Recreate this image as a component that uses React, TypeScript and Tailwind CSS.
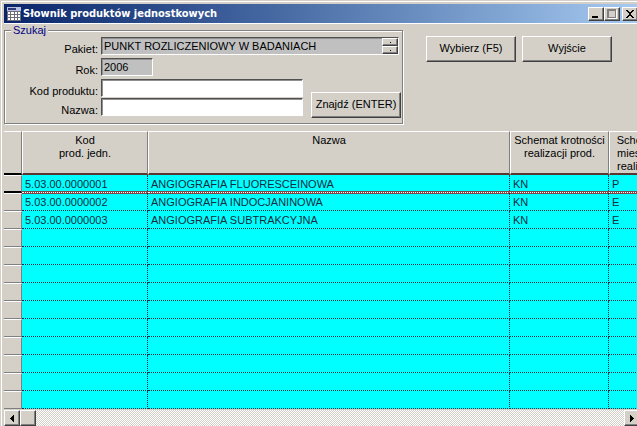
import type { InputHTMLAttributes, ReactNode } from 'react'

interface Product {
  code: string
  name: string
  scheme: string
  monthly: string
}

const products: Product[] = [
  { code: '5.03.00.0000001', name: 'ANGIOGRAFIA FLUORESCEINOWA', scheme: 'KN', monthly: 'P' },
  { code: '5.03.00.0000002', name: 'ANGIOGRAFIA INDOCJANINOWA', scheme: 'KN', monthly: 'E' },
  { code: '5.03.00.0000003', name: 'ANGIOGRAFIA SUBTRAKCYJNA', scheme: 'KN', monthly: 'E' },
]

const VISIBLE_ROWS = 13

const rows = Array.from({ length: VISIBLE_ROWS }, (_, i) => products[i] ?? null)

const raised =
  'bg-[#d4d0c8] border border-t-white border-l-white border-r-[#404040] border-b-[#404040] shadow-[inset_-1px_-1px_0_#808080]'

const sunken =
  'h-[18px] min-w-0 border border-t-[#505050] border-l-[#505050] border-r-white border-b-white shadow-[inset_1px_1px_0_#909090]'

function CaptionButton({ label, className = '', children }: { label: string; className?: string; children: ReactNode }) {
  return (
    <button type="button" aria-label={label} className={`${raised} flex h-[14px] w-4 shrink-0 items-center justify-center ${className}`}>
      {children}
    </button>
  )
}

function PushButton({ children }: { children: ReactNode }) {
  return (
    <button type="button" className={`${raised} h-[26px] w-[90px] shrink-0 whitespace-nowrap pb-px text-center`}>
      {children}
    </button>
  )
}

function Field({ id, label, className = '', children, ...rest }: { label: string; children?: ReactNode } & InputHTMLAttributes<HTMLInputElement>) {
  return (
    <div className="flex items-end">
      <label htmlFor={id} className="w-24 shrink-0 pr-[3px] text-right leading-3">
        {label}
      </label>
      <div className={`${sunken} flex items-center ${className}`}>
        <input id={id} type="text" className="h-4 w-full min-w-0 bg-transparent pl-[2px] outline-none" {...rest} />
        {children}
      </div>
    </div>
  )
}

function TableIcon() {
  return (
    <svg width="14" height="14" viewBox="0 0 14 14" shapeRendering="crispEdges" className="shrink-0" aria-hidden="true">
      <path fill="#6c6c78" d="M0 0h14v14H0z" />
      <path fill="#b8c0e0" d="M0 0h14v4H0z" />
      <path fill="#303878" d="M1 1h8v2H1z" />
      <path fill="#fff" d="M1 5h2v2H1zM4 5h3v2H4zM8 5h2v2H8zM11 5h2v2h-2zM1 8h2v2H1zM4 8h3v2H4zM8 8h2v2H8zM11 8h2v2h-2zM1 11h2v2H1zM4 11h3v2H4zM8 11h2v2H8zM11 11h2v2h-2z" />
    </svg>
  )
}

function TitleBar() {
  return (
    <header className="flex h-[19px] items-center bg-linear-to-r from-[#0a246a] to-[#a6caf0] pl-[3px]">
      <TableIcon />
      <h1 className="ml-[2px] flex-1 truncate font-['DejaVu_Sans_Condensed','DejaVu_Sans',sans-serif] text-[11px] leading-4 font-bold text-white">
        Słownik produktów jednostkowych
      </h1>
      <CaptionButton label="Minimalizuj">
        <svg width="12" height="10" shapeRendering="crispEdges"><path d="M2 7h6v2H2z" /></svg>
      </CaptionButton>
      <CaptionButton label="Maksymalizuj">
        <svg width="12" height="10" shapeRendering="crispEdges">
          <path d="M2 1h9v9H2z" fill="#fff" />
          <path d="M1 0h9v9H1z" fill="#808080" />
          <path d="M3 2h6v6H3z" fill="#d4d0c8" />
        </svg>
      </CaptionButton>
      <CaptionButton label="Zamknij" className="ml-[2px] -mr-px">
        <svg width="12" height="10" shapeRendering="crispEdges">
          <path d="M2 1h2v1h1v1h2V2h1V1h2v1H9v1H8v1H7v2h1v1h1v1h1v1H8V8H7V7H5v1H4v1H2V8h1V7h1V6h1V4H4V3H3V2H2z" />
        </svg>
      </CaptionButton>
    </header>
  )
}

function SearchBox() {
  return (
    <fieldset className="w-[399px] shrink-0 border border-[#808080] pt-px pb-[5px] shadow-[1px_1px_0_#fff,inset_1px_1px_0_#fff]">
      <legend className="ml-[6px] bg-[#d4d0c8] px-[2px] leading-3 text-[#000080]">Szukaj</legend>
      <div className="flex flex-col gap-[3px]">
        <Field id="pakiet" label="Pakiet:" readOnly defaultValue="PUNKT ROZLICZENIOWY W BADANIACH" className="w-[298px] bg-[#c0c0c0]">
          <div className="flex h-4 w-4 shrink-0 flex-col">
            <button type="button" aria-label="Poprzedni pakiet" className={`${raised} flex h-2 items-center justify-center`}>
              <span className="size-px bg-black" />
            </button>
            <button type="button" aria-label="Następny pakiet" className={`${raised} flex h-2 items-center justify-center`}>
              <span className="size-px bg-black" />
            </button>
          </div>
        </Field>
        <Field id="rok" label="Rok:" readOnly defaultValue="2006" className="w-[52px] bg-[#c0c0c0]" />
        <div className="flex items-end gap-2">
          <div className="flex flex-col gap-px pb-[2px]">
            <Field id="kod" label="Kod produktu:" className="w-[202px] bg-white" />
            <Field id="nazwa" label="Nazwa:" className="w-[202px] bg-white" />
          </div>
          <PushButton>Znajdź (ENTER)</PushButton>
        </div>
      </div>
    </fieldset>
  )
}

const th = 'border-t border-r border-l border-t-white border-l-white border-r-[#808080] border-b-2 border-b-[#5c3430] px-0 pt-[2px] align-top font-normal leading-[13px]'

const selectedCell =
  'border-b-white bg-[linear-gradient(#00ffff_16px,#7c4848_16px)] bg-origin-border'

function ProductTable() {
  return (
    <div className="overflow-hidden">
      <table className="w-[calc(100%+31px)] table-fixed border-separate border-spacing-0">
        <colgroup>
          <col className="w-[18px]" />
          <col className="w-[126px]" />
          <col />
          <col className="w-[99px]" />
          <col className="w-[59px]" />
        </colgroup>
        <thead>
          <tr className="h-11">
            <td className="border-t border-r border-b-2 border-t-white border-r-[#808080] border-b-black" />
            <th scope="col" className={th}>Kod<br />prod. jedn.</th>
            <th scope="col" className={th}>Nazwa</th>
            <th scope="col" className={th}>Schemat krotności<br />realizacji prod.</th>
            <th scope="col" className={th}>Schemat<br />miesięcy<br />realizacji</th>
          </tr>
        </thead>
        <tbody>
          {rows.map((row, i) => {
            const selected = i === 0
            const cell = `h-[18px] overflow-hidden whitespace-nowrap border-r border-b border-dotted border-r-[#103040] p-0 pl-[3px] leading-4 text-[#102c40] ${
              selected ? selectedCell : 'border-b-[#103040] bg-[#00ffff]'
            } ${i === 1 ? 'shadow-[inset_0_1px_0_#7c4848]' : ''}`
            return (
              <tr key={i} aria-selected={selected}>
                <td className={`h-[18px] border-t border-r border-t-white border-r-[#808080] p-0 ${selected ? 'border-b-2 border-b-black' : 'border-b border-b-[#808080]'}`} />
                <td className={cell}>{row?.code}</td>
                <td className={cell}>{row?.name}</td>
                <td className={cell}>{row?.scheme}</td>
                <td className={cell}>{row?.monthly}</td>
              </tr>
            )
          })}
        </tbody>
      </table>
    </div>
  )
}

function ScrollBar() {
  return (
    <div className="mt-px flex h-4 bg-white bg-[repeating-conic-gradient(#d4d0c8_0_25%,#ffffff_0_50%)] bg-size-[2px_2px]">
      <button type="button" aria-label="Przewiń w lewo" className={`${raised} flex w-4 items-center justify-center`}>
        <svg width="4" height="7" shapeRendering="crispEdges"><path d="M3 0h1v7H3V6H2V5H1V4H0V3h1V2h1V1h1z" /></svg>
      </button>
      <div className={`${raised} w-4`} />
      <button type="button" aria-label="Przewiń w prawo" className={`${raised} -mr-[3px] ml-auto flex w-4 items-center justify-center`}>
        <svg width="4" height="7" shapeRendering="crispEdges"><path d="M1 0H0v7h1V6h1V5h1V4h1V3H3V2H2V1H1z" /></svg>
      </button>
    </div>
  )
}

export default function App() {
  return (
    <div className="overflow-hidden bg-[#d4d0c8] pt-px pl-px font-['Liberation_Sans',Arial,sans-serif] text-[11px] text-black">
      <main className="border-t border-l border-white pt-[2px] pl-[2px]">
        <TitleBar />
        <div className="flex items-start gap-[23px] border-t border-white pb-[7px]">
          <SearchBox />
          <div className="flex gap-[6px] pt-3">
            <PushButton>Wybierz (F5)</PushButton>
            <PushButton>Wyjście</PushButton>
          </div>
        </div>
        <ProductTable />
        <ScrollBar />
      </main>
    </div>
  )
}
